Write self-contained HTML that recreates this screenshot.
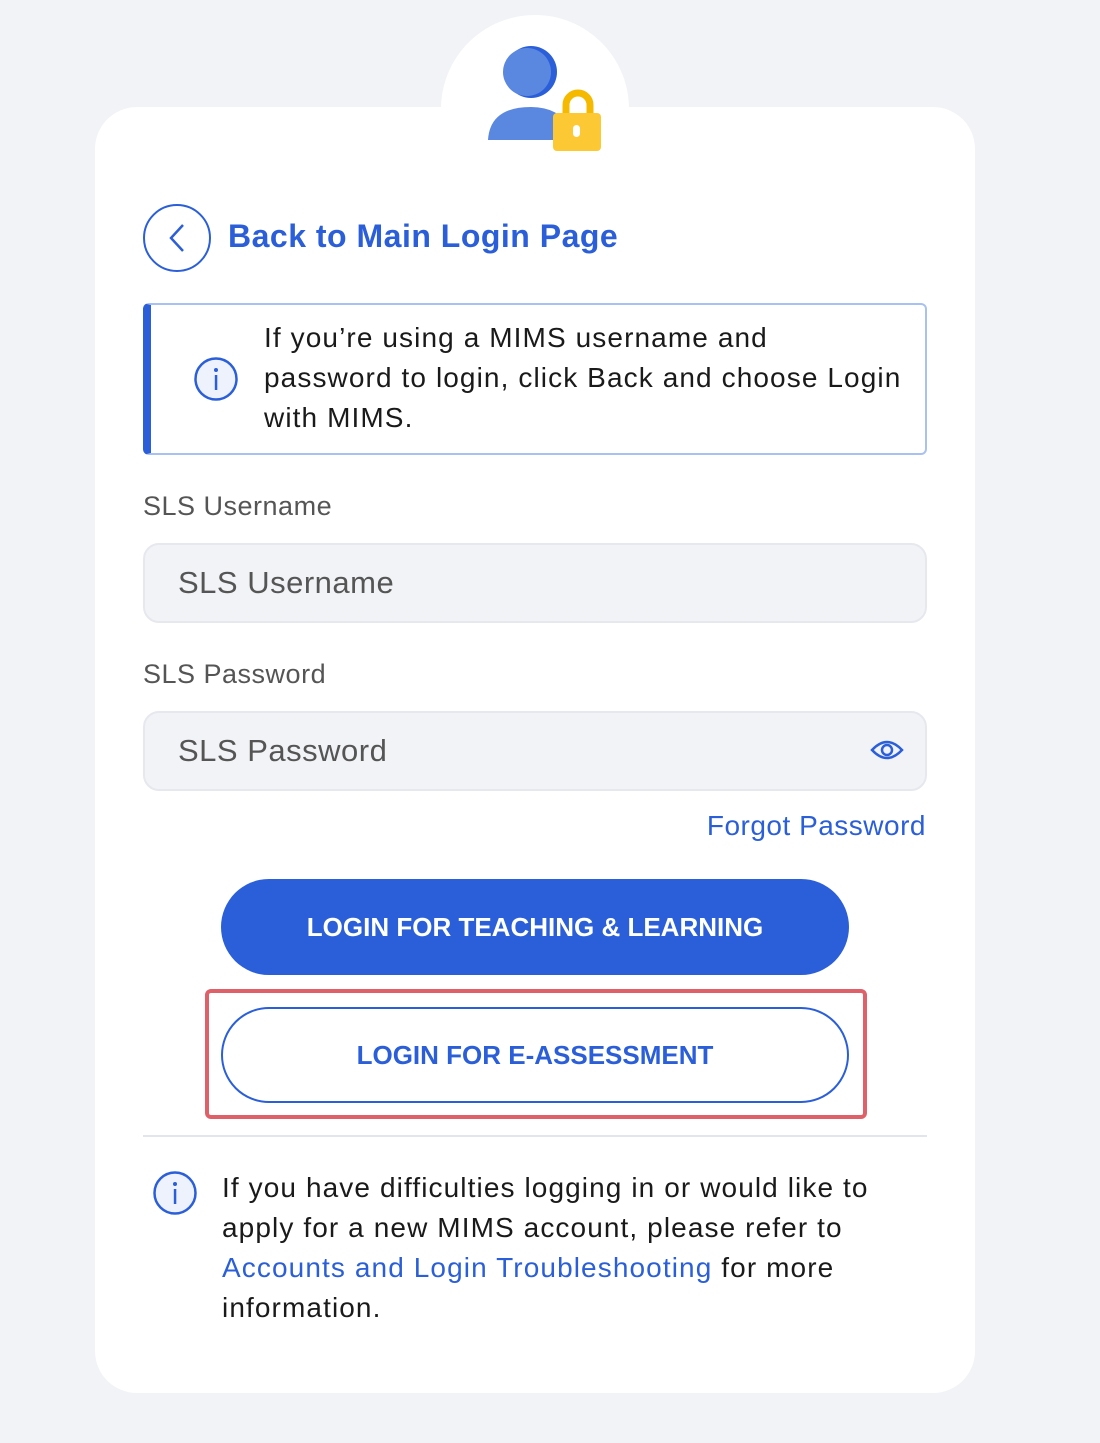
<!DOCTYPE html>
<html><head><meta charset="utf-8"><style>
*{margin:0;padding:0;box-sizing:border-box}
body{width:1100px;height:1443px;background:#f2f3f7;font-family:"Liberation Sans",sans-serif;position:relative;overflow:hidden}
.card{position:absolute;left:95px;top:107px;width:880px;height:1286px;background:#fff;border-radius:42px}
.bump{position:absolute;left:441px;top:15px;width:188px;height:188px;border-radius:50%;background:#fff}
.abs{position:absolute}
.back{left:228px;top:218px;font-size:32px;font-weight:bold;color:#2b5fd9;letter-spacing:0.5px}
.info{left:143px;top:303px;width:784px;height:152px;border:2px solid #a9c1f2;border-left:8px solid #2b5fd9;border-radius:6px}
.txt{font-size:28px;line-height:40px;color:#1a1a1a;white-space:nowrap;letter-spacing:1.1px}
.label{font-size:27px;color:#555;letter-spacing:0.5px}
.input{left:143px;width:784px;height:80px;background:#f2f3f7;border:2px solid #e6e8ee;border-radius:16px;font-size:31px;color:#555;padding:20px 0 0 33px;letter-spacing:0.5px}
.btn1{left:221px;top:879px;width:628px;height:96px;background:#2b5fd9;border-radius:48px;color:#fff;font-size:26px;font-weight:bold;text-align:center;line-height:96px}
.btn2{left:221px;top:1007px;width:628px;height:96px;border:2px solid #2b5fd9;border-radius:48px;color:#2b5fd9;font-size:26px;font-weight:bold;text-align:center;line-height:92px}
.red{left:205px;top:989px;width:662px;height:130px;border:4px solid #e0606a;border-radius:6px}
a{color:#2b5fd9;text-decoration:none}
</style></head><body>
<div class="bump"></div>
<div class="card"></div>
<svg class="abs" style="left:486px;top:45px" width="120" height="110" viewBox="0 0 120 110">
<circle cx="45" cy="27" r="26" fill="#2b5fd9"/>
<circle cx="41" cy="27" r="24" fill="#5a87e0"/>
<path d="M2 95 Q4 62 45 62 Q80 62 88 95 Z" fill="#5a87e0"/>
<path d="M80 72 V60 a12 12 0 0 1 24 0 V72" stroke="#f5b900" stroke-width="7" fill="none"/>
<rect x="67" y="68" width="48" height="38" rx="4" fill="#fcc934"/>
<rect x="87" y="80" width="7" height="12" rx="3.5" fill="#fff"/>
</svg>
<svg class="abs" style="left:142px;top:203px" width="70" height="70"><circle cx="35" cy="35" r="33" fill="none" stroke="#2b5fd9" stroke-width="2"/><path d="M41 22 L29 35 L41 48" fill="none" stroke="#2b5fd9" stroke-width="2.5"/></svg>
<div class="abs back">Back to Main Login Page</div>
<div class="abs info"></div>
<svg class="abs" style="left:193px;top:356px" width="46" height="46"><circle cx="23" cy="23" r="20.5" fill="#eef2fc" stroke="#2b5fd9" stroke-width="2.5"/><circle cx="23" cy="14" r="2" fill="#2b5fd9"/><rect x="21.8" y="19" width="2.5" height="15" fill="#2b5fd9"/></svg>
<div class="abs txt" style="left:264px;top:318px">If you’re using a MIMS username and<br>password to login, click Back and choose Login<br>with MIMS.</div>
<div class="abs label" style="left:143px;top:491px">SLS Username</div>
<div class="abs input" style="top:543px">SLS Username</div>
<div class="abs label" style="left:143px;top:659px">SLS Password</div>
<div class="abs input" style="top:711px">SLS Password</div>
<svg class="abs" style="left:870px;top:737px" width="34" height="26"><path d="M2 13 Q17 -3 32 13 Q17 29 2 13Z" fill="none" stroke="#2b5fd9" stroke-width="2.5"/><circle cx="17" cy="13" r="5" fill="none" stroke="#2b5fd9" stroke-width="2.5"/></svg>
<div class="abs" style="right:174px;top:810px;font-size:28px;color:#2b5fd9;letter-spacing:0.5px">Forgot Password</div>
<div class="abs btn1">LOGIN FOR TEACHING &amp; LEARNING</div>
<div class="abs red"></div>
<div class="abs btn2">LOGIN FOR E-ASSESSMENT</div>
<div class="abs" style="left:143px;top:1135px;width:784px;height:2px;background:#e3e5ea"></div>
<svg class="abs" style="left:152px;top:1170px" width="46" height="46"><circle cx="23" cy="23" r="20.5" fill="#eef2fc" stroke="#2b5fd9" stroke-width="2.5"/><circle cx="23" cy="14" r="2" fill="#2b5fd9"/><rect x="21.8" y="19" width="2.5" height="15" fill="#2b5fd9"/></svg>
<div class="abs txt" style="left:222px;top:1168px">If you have difficulties logging in or would like to<br>apply for a new MIMS account, please refer to<br><a>Accounts and Login Troubleshooting</a> for more<br>information.</div>
</body></html>
